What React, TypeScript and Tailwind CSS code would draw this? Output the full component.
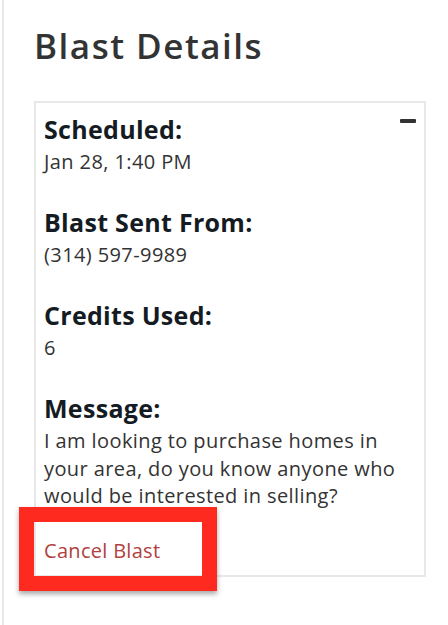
const details = [
  { label: "Scheduled:", value: "Jan 28, 1:40 PM" },
  { label: "Blast Sent From:", value: "(314) 597-9989" },
  { label: "Credits Used:", value: "6" },
];

export default function App() {
  return (
    <div className="min-h-[625px] bg-white font-['Open_Sans',sans-serif]">
      <div className="ml-[2px] min-h-[625px] border-l-2 border-[#e8e8e8] pl-[30px] pr-[22px] pt-[25px]">
        <h1 className="text-[35px] leading-[41px] font-semibold tracking-[1.5px] text-[#333]">Blast Details</h1>

        <div className="relative mt-[35px] border-2 border-[#e8e8e8] pl-[8px] pr-[10px] pt-[12px] pb-[10px]">
          <button className="absolute right-[8px] top-[16px] h-[4px] w-[16px] rounded-[1px] bg-[#333]" aria-label="Collapse" />

          <div className="flex flex-col gap-[32px]">
            {details.map((d) => (
              <div key={d.label}>
                <div className="mb-1 text-[25px] leading-[29px] font-bold tracking-[0.3px] text-[#151b23]">{d.label}</div>
                <div className="text-[20px] leading-[28px] tracking-[0.4px] text-[#333]">{d.value}</div>
              </div>
            ))}
            <div>
              <div className="mb-1 text-[25px] leading-[29px] font-bold tracking-[0.3px] text-[#151b23]">Message:</div>
              <p className="text-[20px] leading-[27.5px] tracking-[0.4px] text-[#333]">
                I am looking to purchase homes in your area, do you know anyone who would be interested in selling?
              </p>
            </div>
          </div>

          <div className="mt-[27px]">
            <a className="relative inline-block text-[20px] leading-[28px] tracking-[0.3px] text-[#b0413e]">
              <span className="absolute left-[-25px] top-[-30px] h-[84px] w-[198px] border-[15px] border-[#ff2a1f] shadow-[0_3px_5px_rgba(0,0,0,0.35)]" />
              Cancel Blast
            </a>
          </div>
        </div>
      </div>
    </div>
  );
}
